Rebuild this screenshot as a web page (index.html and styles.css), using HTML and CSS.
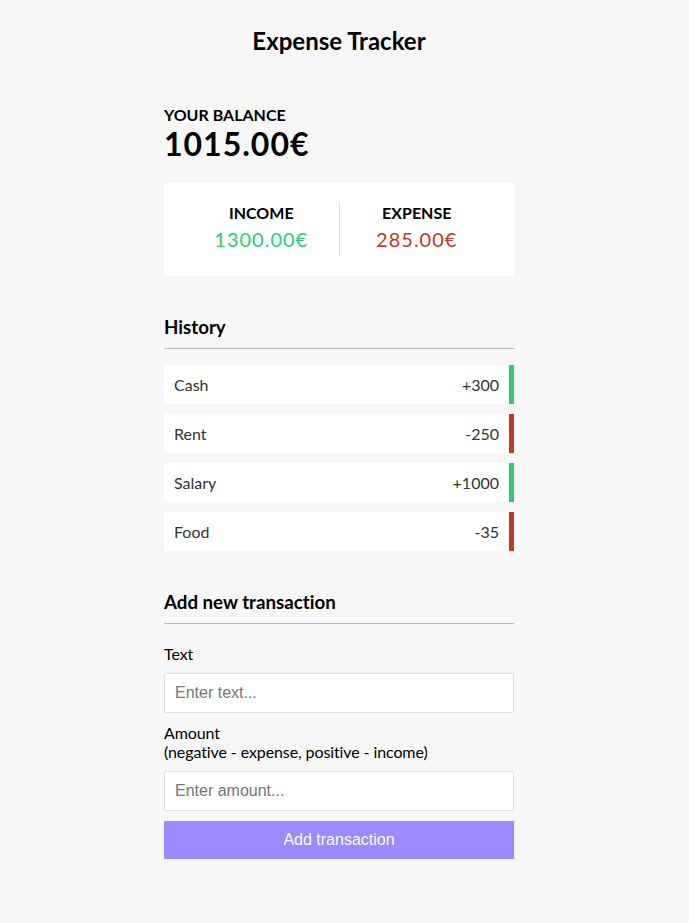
FILE: index.html
```html
<!DOCTYPE html>
<html lang="en">
<head>
<meta charset="UTF-8">
<title>Expense Tracker</title>
<link rel="stylesheet" href="styles.css">
</head>
<body>
<h2 class="title">Expense Tracker</h2>
<div class="container">
  <h4 class="label-upper">Your Balance</h4>
  <h1 class="balance">1015.00€</h1>

  <div class="inc-exp-container">
    <div class="inc-col inc-col-first">
      <h4 class="label-upper">Income</h4>
      <p class="money plus">1300.00€</p>
    </div>
    <div class="inc-col">
      <h4 class="label-upper">Expense</h4>
      <p class="money minus">285.00€</p>
    </div>
  </div>

  <h3 class="section-title">History</h3>
  <ul class="list">
    <li class="item plus"><span>Cash</span><span>+300</span></li>
    <li class="item minus"><span>Rent</span><span>-250</span></li>
    <li class="item plus"><span>Salary</span><span>+1000</span></li>
    <li class="item minus"><span>Food</span><span>-35</span></li>
  </ul>

  <h3 class="section-title">Add new transaction</h3>
  <form class="form">
    <div class="form-control">
      <label class="field-label" for="text">Text</label>
      <input class="field" type="text" id="text" placeholder="Enter text...">
    </div>
    <div class="form-control">
      <label class="field-label" for="amount">Amount <br>(negative - expense, positive - income)</label>
      <input class="field" type="text" id="amount" placeholder="Enter amount...">
    </div>
    <button class="btn" type="button">Add transaction</button>
  </form>
</div>
</body>
</html>
```

FILE: styles.css
```css
* {
  box-sizing: border-box;
}

body {
  background-color: #f7f7f7;
  display: flex;
  flex-direction: column;
  align-items: center;
  margin: 0;
  padding: 6px 11px 0 0;
  font-family: "Lato", "Liberation Sans", sans-serif;
  font-variant-ligatures: none;
  color: #000;
}

.title {
  font-size: 24px;
  margin: 20px 0;
  text-align: center;
}

.container {
  margin: 30px auto 0;
  width: 350px;
}

.label-upper {
  margin: 0;
  font-size: 16px;
  text-transform: uppercase;
}

.balance {
  margin: 0;
  font-size: 32px;
  letter-spacing: 1px;
}

.inc-exp-container {
  background-color: #fff;
  padding: 20px;
  display: flex;
  justify-content: space-between;
  margin: 20px 0;
}

.inc-col {
  flex: 1;
  text-align: center;
}

.inc-col-first {
  border-right: 1px solid #dedede;
}

.money {
  font-size: 20px;
  letter-spacing: 1px;
  margin: 5px 0;
}

.money.plus {
  color: #2ecc71;
}

.money.minus {
  color: #c0392b;
}

.section-title {
  font-size: 18.72px;
  border-bottom: 1px solid #bbb;
  padding-bottom: 10px;
  margin: 40px 0 10px;
}

.list {
  list-style-type: none;
  padding: 0;
  margin: 16px 0 40px;
}

.item {
  background-color: #fff;
  color: #333;
  display: flex;
  justify-content: space-between;
  padding: 10px;
  margin: 10px 0;
  font-size: 16px;
}

.item.plus {
  border-right: 5px solid #2ecc71;
}

.item.minus {
  border-right: 5px solid #c0392b;
}

.form {
  margin: 0;
}

.field-label {
  display: inline-block;
  margin: 10px 0;
  font-size: 16px;
  letter-spacing: -0.1px;
}

.field {
  border: 1px solid #dedede;
  border-radius: 2px;
  display: block;
  font-family: "Liberation Sans", Arial, sans-serif;
  font-size: 16px;
  padding: 10px;
  width: 100%;
  background: #fff;
  color: #000;
}

.field::placeholder {
  color: #757575;
}

.btn {
  cursor: pointer;
  background-color: #9c88ff;
  color: #fff;
  border: 0;
  display: block;
  font-family: "Liberation Sans", Arial, sans-serif;
  font-size: 16px;
  margin: 10px 0 30px;
  padding: 10px;
  width: 100%;
}
```
